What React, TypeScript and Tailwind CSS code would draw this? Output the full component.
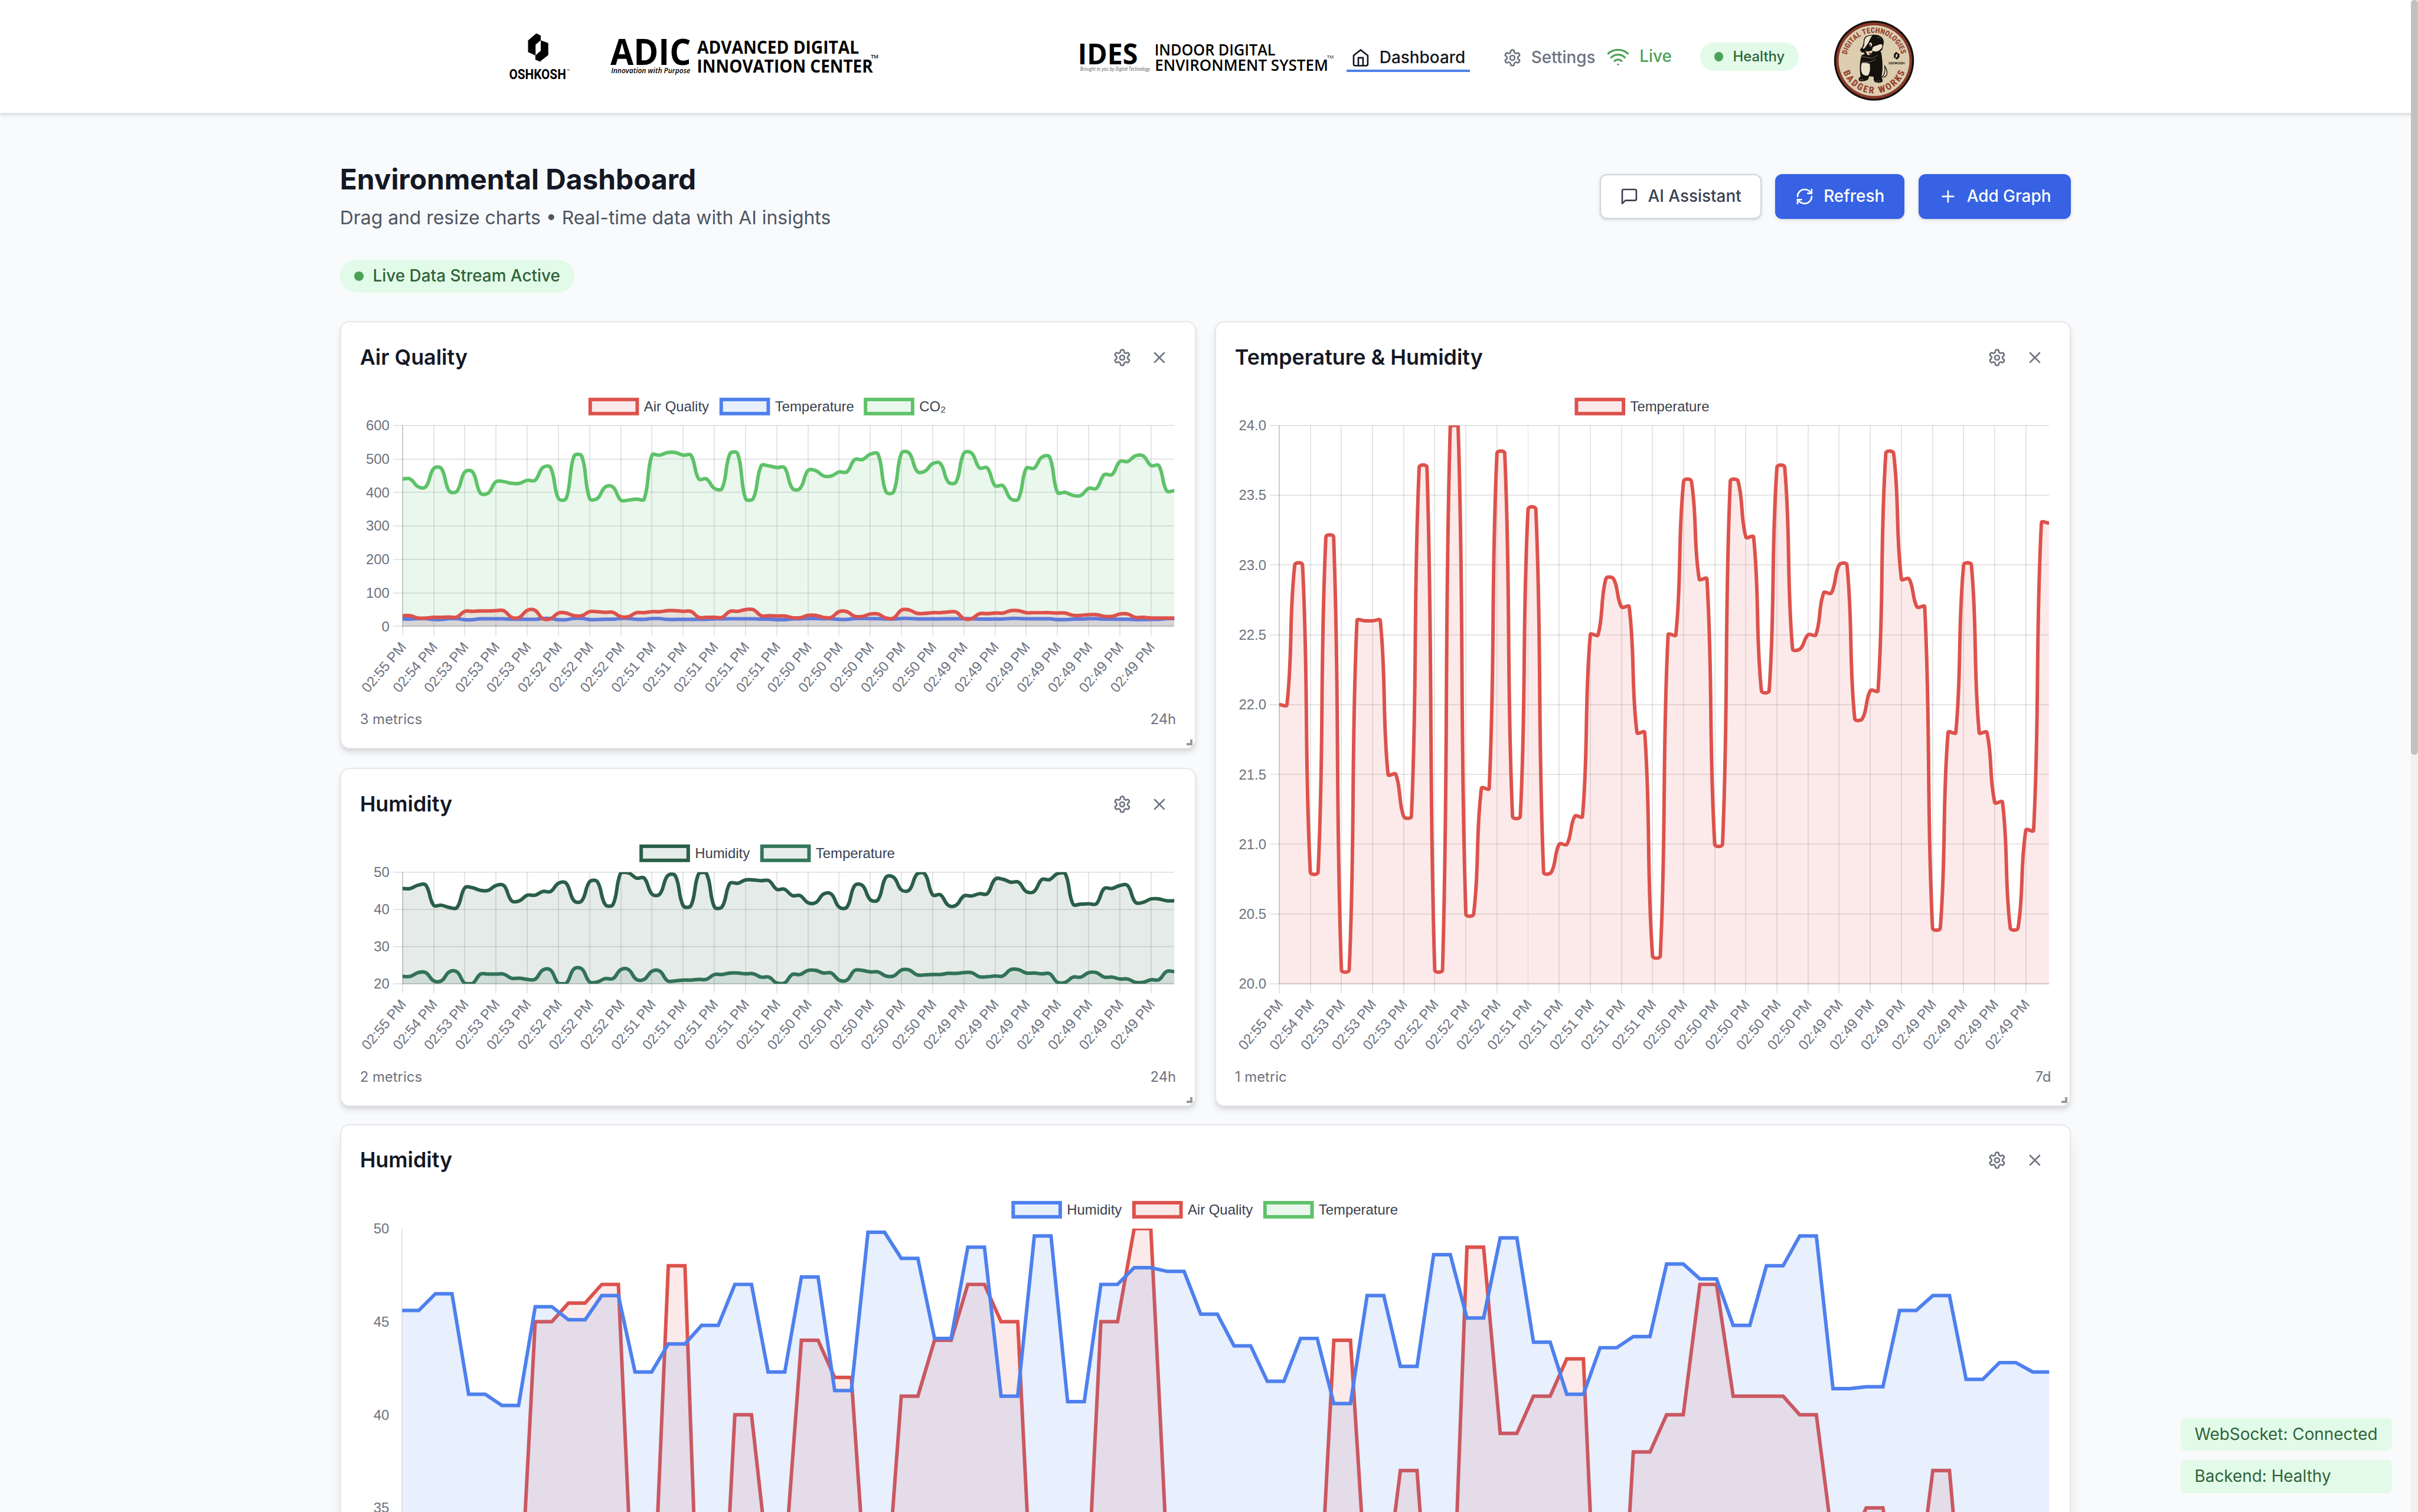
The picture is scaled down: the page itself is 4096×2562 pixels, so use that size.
import React from "react";

type Dataset = {
  label: string;
  labelWidth: number;
  color: string;
  fill: string;
  values: number[];
};

type Area = { left: number; right: number; top: number; bottom: number };
type Point = { x: number; y: number };

const TEMPERATURE = [
  22, 23, 20.8, 23.2, 20.1, 22.6, 22.6, 21.5, 21.2, 23.7, 20.1, 24, 20.5, 21.4, 23.8, 21.2, 23.4,
  20.8, 21, 21.2, 22.5, 22.9, 22.7, 21.8, 20.2, 22.5, 23.6, 22.9, 21, 23.6, 23.2, 22.1, 23.7, 22.4,
  22.5, 22.8, 23, 21.9, 22.1, 23.8, 22.9, 22.7, 20.4, 21.8, 23, 21.8, 21.3, 20.4, 21.1, 23.3,
];

const HUMIDITY = [
  45.6, 46.5, 41.1, 40.5, 45.8, 45.1, 46.4, 42.3, 43.8, 44.8, 47, 42.3, 47.4, 41.3, 49.8, 48.4,
  44.1, 49, 41, 49.6, 40.7, 47, 47.9, 47.7, 45.4, 43.7, 41.8, 44.1, 40.6, 46.4, 42.6, 48.6, 45.2,
  49.5, 43.9, 41.1, 43.6, 44.2, 48.1, 47.3, 44.8, 48, 49.6, 41.4, 41.5, 45.6, 46.4, 41.9, 42.8,
  42.3,
];

const AIR_QUALITY = [
  32, 25, 27, 28, 45, 46, 47, 27, 48, 23, 40, 32, 44, 42, 29, 41, 44, 47, 45, 27, 27, 45, 50, 32,
  31, 26, 33, 27, 44, 30, 37, 25, 49, 39, 41, 43, 23, 38, 40, 47, 41, 41, 40, 33, 35, 30, 37, 27,
  25, 25,
];

const CO2 = [
  440, 417, 471, 404, 461, 398, 432, 427, 436, 474, 382, 508, 382, 416, 377, 380, 511, 519, 511,
  440, 412, 515, 382, 479, 474, 412, 465, 449, 461, 498, 514, 402, 517, 463, 486, 431, 517, 473,
  420, 381, 472, 505, 400, 391, 412, 453, 492, 509, 480, 405,
];

const TIMES = [
  "02:55", "02:54", "02:53", "02:53", "02:53", "02:52", "02:52", "02:52", "02:51", "02:51",
  "02:51", "02:51", "02:51", "02:50", "02:50", "02:50", "02:50", "02:50", "02:49", "02:49",
  "02:49", "02:49", "02:49", "02:49", "02:49",
];

const RED = { color: "#dd524c", fill: "rgba(221,82,76,0.12)" };
const BLUE = { color: "#4e80ee", fill: "rgba(78,128,238,0.13)" };
const GREEN = { color: "#5ec269", fill: "rgba(94,194,105,0.13)" };
const FOREST = { color: "#2a5e48", fill: "rgba(42,94,72,0.12)" };
const PINE = { color: "#34765a", fill: "rgba(52,118,90,0.12)" };

const clamp = (v: number, lo: number, hi: number) => Math.max(lo, Math.min(hi, v));

/** Every reading is stored twice, one point apart. */
function toPoints(values: number[], area: Area, min: number, max: number): Point[] {
  const doubled = values.flatMap((v) => [v, v]);
  const step = (area.right - area.left) / (doubled.length - 1);
  return doubled.map((v, i) => ({
    x: area.left + i * step,
    y: area.bottom - ((v - min) / (max - min)) * (area.bottom - area.top),
  }));
}

/** Cardinal-like spline with control points kept inside the chart area. */
function linePath(points: Point[], area: Area, tension: number): string {
  if (tension === 0) {
    return points.map((p, i) => `${i ? "L" : "M"}${p.x.toFixed(2)} ${p.y.toFixed(2)}`).join("");
  }
  const controls = points.map((p, i) => {
    const prev = points[i - 1] ?? p;
    const next = points[i + 1] ?? p;
    const d01 = Math.hypot(p.x - prev.x, p.y - prev.y);
    const d12 = Math.hypot(next.x - p.x, next.y - p.y);
    const sum = d01 + d12 || 1;
    const fa = (tension * d01) / sum;
    const fb = (tension * d12) / sum;
    return {
      inX: clamp(p.x - fa * (next.x - prev.x), area.left, area.right),
      inY: clamp(p.y - fa * (next.y - prev.y), area.top, area.bottom),
      outX: clamp(p.x + fb * (next.x - prev.x), area.left, area.right),
      outY: clamp(p.y + fb * (next.y - prev.y), area.top, area.bottom),
    };
  });
  let d = `M${points[0].x.toFixed(2)} ${points[0].y.toFixed(2)}`;
  for (let i = 1; i < points.length; i++) {
    const a = controls[i - 1];
    const b = controls[i];
    d += `C${a.outX.toFixed(2)} ${a.outY.toFixed(2)} ${b.inX.toFixed(2)} ${b.inY.toFixed(2)} ${points[i].x.toFixed(2)} ${points[i].y.toFixed(2)}`;
  }
  return d;
}

type ChartProps = {
  id: string;
  width: number;
  height: number;
  left: number;
  right: number;
  min: number;
  max: number;
  ticks: string[];
  datasets: Dataset[];
  tension: number;
  grid: boolean;
};

function Chart({ id, width, height, left, right, min, max, ticks, datasets, tension, grid }: ChartProps) {
  const area: Area = { left, right, top: 32, bottom: height - 59 };
  const legendTotal =
    datasets.reduce((sum, d) => sum + 46 + d.labelWidth, 0) + 10 * (datasets.length - 1);
  let cursor = (width - legendTotal) / 2 - 0.3;
  const legend = datasets.map((d) => {
    const x = cursor;
    cursor += 46 + d.labelWidth + 10;
    return { ...d, x };
  });
  const step = (area.right - area.left) / 99;
  const yFor = (i: number) => area.top + ((area.bottom - area.top) * i) / (ticks.length - 1);

  return (
    <svg
      width={width}
      height={height}
      viewBox={`0 0 ${width} ${height}`}
      className="block overflow-visible"
      fontFamily="'Liberation Sans', Arial, sans-serif"
      fontSize="12"
    >
      <defs>
        <clipPath id={id}>
          <rect x={area.left} y={area.top} width={area.right - area.left} height={area.bottom - area.top} />
        </clipPath>
      </defs>

      {legend.map((d) => (
        <g key={d.label}>
          <rect x={d.x} y={10} width={40} height={12} fill={d.fill} stroke={d.color} strokeWidth={3} />
          <text x={d.x + 45.7} y={20} fill="#394150">
            {d.label}
          </text>
        </g>
      ))}

      <g stroke="rgba(0,0,0,0.1)" strokeWidth={1} shapeRendering="crispEdges">
        {grid &&
          ticks.map((t, i) => (
            <line key={t} x1={area.left - 8} x2={area.right} y1={yFor(i)} y2={yFor(i)} />
          ))}
        {grid &&
          TIMES.map((_, i) => {
            const x = area.left + i * 4 * step;
            return <line key={i} x1={x} x2={x} y1={area.top} y2={area.bottom + 8} />;
          })}
        <line x1={area.left} x2={area.left} y1={area.top} y2={area.bottom} />
        <line x1={area.left} x2={area.right} y1={area.bottom} y2={area.bottom} />
      </g>

      <g clipPath={`url(#${id})`}>
        {[...datasets].reverse().map((d) => {
          const path = linePath(toPoints(d.values, area, min, max), area, tension);
          return (
            <g key={d.label}>
              <path d={`${path}L${area.right} ${area.bottom}L${area.left} ${area.bottom}Z`} fill={d.fill} />
              <path d={path} fill="none" stroke={d.color} strokeWidth={3} strokeLinejoin="miter" />
            </g>
          );
        })}
      </g>

      <g fill="#6d727f">
        {ticks.map((t, i) => (
          <text key={t} x={area.left - 11} y={yFor(i) + 4.2} textAnchor="end">
            {t}
          </text>
        ))}
        {grid &&
          TIMES.map((t, i) => (
            <text
              key={i}
              textAnchor="end"
              transform={`translate(${area.left + i * 4 * step + 0.6} ${area.bottom + 15}) rotate(-50)`}
              y={4.2}
            >
              {`${t} PM`}
            </text>
          ))}
      </g>
    </svg>
  );
}

function Icon({ className, children }: { className: string; children: React.ReactNode }) {
  return (
    <svg
      viewBox="0 0 24 24"
      fill="none"
      stroke="currentColor"
      strokeWidth={2}
      strokeLinecap="round"
      strokeLinejoin="round"
      className={className}
    >
      {children}
    </svg>
  );
}

const GearPaths = () => (
  <>
    <path d="M12.22 2h-.44a2 2 0 0 0-2 2v.18a2 2 0 0 1-1 1.73l-.43.25a2 2 0 0 1-2 0l-.15-.08a2 2 0 0 0-2.73.73l-.22.38a2 2 0 0 0 .73 2.73l.15.1a2 2 0 0 1 1 1.72v.51a2 2 0 0 1-1 1.74l-.15.09a2 2 0 0 0-.73 2.73l.22.38a2 2 0 0 0 2.73.73l.15-.08a2 2 0 0 1 2 0l.43.25a2 2 0 0 1 1 1.73V20a2 2 0 0 0 2 2h.44a2 2 0 0 0 2-2v-.18a2 2 0 0 1 1-1.73l.43-.25a2 2 0 0 1 2 0l.15.08a2 2 0 0 0 2.73-.73l.22-.39a2 2 0 0 0-.73-2.73l-.15-.08a2 2 0 0 1-1-1.74v-.5a2 2 0 0 1 1-1.74l.15-.09a2 2 0 0 0 .73-2.73l-.22-.38a2 2 0 0 0-2.73-.73l-.15.08a2 2 0 0 1-2 0l-.43-.25a2 2 0 0 1-1-1.73V4a2 2 0 0 0-2-2z" />
    <circle cx="12" cy="12" r="3" />
  </>
);

type CardProps = {
  title: string;
  metrics: string;
  range: string;
  className: string;
  children: React.ReactNode;
};

function ChartCard({ title, metrics, range, className, children }: CardProps) {
  return (
    <section
      className={`relative flex flex-col rounded-lg border-[1.01px] border-[#e5e7ea] bg-white p-4 ${className}`}
    >
      <div className="flex h-7 items-center justify-between">
        <h3 className="text-lg font-semibold text-[#131825]">{title}</h3>
        <div className="flex gap-1 text-[#6d727f]">
          <button className="p-1.5">
            <Icon className="size-4">
              <GearPaths />
            </Icon>
          </button>
          <button className="p-1.5">
            <Icon className="size-4">
              <path d="M18 6 6 18" />
              <path d="m6 6 12 12" />
            </Icon>
          </button>
        </div>
      </div>
      <div className="mt-3">{children}</div>
      <div className="mt-3 flex justify-between text-xs text-[#6d727f]">
        <span>{metrics}</span>
        <span>{range}</span>
      </div>
      <span className="absolute right-[2px] bottom-[2px] size-[5px] border-r-[2.01px] border-b-[2.01px] border-black/40" />
    </section>
  );
}

function OshkoshLogo() {
  return (
    <svg viewBox="433 0 50 96" className="ml-[433px] h-24 w-[50px] shrink-0 overflow-visible">
      <path d="M455.9 28.3 459.6 30.2V34.2L455.2 38V47.2L448.8 44.3V34.4Z" />
      <path d="M459.6 34.2 466 36.7V46.8L458.9 52.5 455 50.7V47.2L459.6 43.2Z" />
      <text
        x="432.7"
        y="67.3"
        fontFamily="Roboto, sans-serif"
        fontWeight="700"
        fontSize="11.7"
        textLength="48.4"
        lengthAdjust="spacingAndGlyphs"
      >
        OSHKOSH
      </text>
      <text x="481.8" y="60.4" fontFamily="Roboto, sans-serif" fontSize="1.6">
        TM
      </text>
    </svg>
  );
}

function AdicLogo() {
  return (
    <svg
      viewBox="519 0 230 96"
      className="ml-9 h-24 w-[230px] shrink-0 overflow-visible"
      fontFamily="'Open Sans', 'Noto Sans', sans-serif"
      fontWeight="700"
    >
      <text x="519" y="55.2" fontSize="30.2" textLength="68.5" lengthAdjust="spacingAndGlyphs">
        ADIC
      </text>
      <text x="519.6" y="62.3" fontSize="6.2" fontWeight="600" fontStyle="italic" textLength="67.4" lengthAdjust="spacingAndGlyphs">
        Innovation with Purpose
      </text>
      <text x="592.8" y="45.6" fontSize="15.2" textLength="137.6" lengthAdjust="spacingAndGlyphs">
        ADVANCED DIGITAL
      </text>
      <text x="592.6" y="61.8" fontSize="15.2" textLength="149.6" lengthAdjust="spacingAndGlyphs">
        INNOVATION CENTER
      </text>
      <text x="740.5" y="49.9" fontSize="4.2" fontWeight="600" textLength="6.4" lengthAdjust="spacingAndGlyphs">
        TM
      </text>
    </svg>
  );
}

function IdesLogo() {
  return (
    <svg
      viewBox="917 0 218 96"
      className="ml-[168px] h-24 w-[218px] shrink-0 overflow-visible"
      fontFamily="'Open Sans', 'Noto Sans', sans-serif"
      fontWeight="700"
    >
      <text x="916.4" y="54.5" fontSize="24.4" textLength="51" lengthAdjust="spacingAndGlyphs">
        IDES
      </text>
      <text x="918.4" y="60" fontSize="4.3" fontWeight="400" fontStyle="italic" fill="#555" textLength="59.4" lengthAdjust="spacingAndGlyphs">
        Brought to you by Digital Technology
      </text>
      <text x="981.6" y="47.3" fontSize="13.2" fontWeight="600" textLength="102.8" lengthAdjust="spacingAndGlyphs">
        INDOOR DIGITAL
      </text>
      <text x="981.9" y="60.2" fontSize="13.2" fontWeight="600" textLength="147.4" lengthAdjust="spacingAndGlyphs">
        ENVIRONMENT SYSTEM
      </text>
      <text x="1128.2" y="49.8" fontSize="3.6" fontWeight="400" textLength="5.8" lengthAdjust="spacingAndGlyphs">
        TM
      </text>
    </svg>
  );
}

function BadgerSeal() {
  return (
    <svg viewBox="52 43 414 414" className="ml-[29.5px] mt-[7px] size-[69px] shrink-0">
      <defs>
        <path id="seal-top" d="M119.6 220.5A142 142 0 0 1 397.4 220.5" />
        <path id="seal-bottom" d="M101 308A168 168 0 0 0 416 308" />
      </defs>
      <circle cx="258.5" cy="250" r="204" fill="#15110d" />
      <circle cx="258.5" cy="250" r="194" fill="#8e3a2b" />
      <circle cx="258.5" cy="250" r="184" fill="#6e2c20" />
      <circle cx="258.5" cy="250" r="181" fill="#dccdae" />
      <g fill="#94402f" fontFamily="Roboto, sans-serif" fontWeight="800" fontStretch="75%">
        <text fontSize="38" textLength="384" lengthAdjust="spacing">
          <textPath href="#seal-top">DIGITAL TECHNOLOGIES</textPath>
        </text>
        <text fontSize="48" textLength="408" lengthAdjust="spacing">
          <textPath href="#seal-bottom">BADGER WORKS</textPath>
        </text>
      </g>

      {/* tail */}
      <path d="M298 332C312 326 316 304 313 278C326 296 330 320 316 331C310 336 302 336 298 332Z" fill="#ece2cc" stroke="#15110d" strokeWidth="4" />
      {/* body, legs and feet */}
      <path d="M196 222C184 250 184 300 190 332C180 336 176 348 184 354C198 358 222 354 228 346C234 338 230 334 234 330L256 332C258 340 254 350 262 358C272 366 296 364 302 356C304 346 298 340 296 332C306 300 302 240 294 206L250 200Z" fill="#15110d" />
      <path d="M196 262C212 260 228 262 236 266C240 290 238 316 226 326C212 330 198 322 194 306C191 290 192 274 196 262Z" fill="#ece2cc" />
      {/* head */}
      <path d="M206 146C206 126 226 119 252 118C284 116 308 130 308 156C308 172 302 176 302 190C296 204 276 214 256 224C236 232 214 226 206 208C196 210 186 202 188 192C196 184 204 178 206 146Z" fill="#15110d" />
      <path d="M210 148C212 130 226 123 250 122C238 134 236 150 226 164C218 174 214 186 204 190C198 188 202 182 206 178C210 168 208 158 210 148Z" fill="#ece2cc" />
      <path d="M262 176C278 172 290 162 300 168C302 182 296 194 276 202C262 206 252 202 248 196C252 186 250 180 262 176Z" fill="#ece2cc" />
      <ellipse cx="241" cy="168" rx="7" ry="10" fill="#ece2cc" />
      <ellipse cx="239" cy="171" rx="3" ry="5" fill="#15110d" />
      <path d="M212 200C224 206 240 204 252 196C250 212 240 222 228 222C220 218 224 208 212 200Z" fill="#ece2cc" />
      <path d="M228 214C234 208 242 208 246 210C242 218 236 220 228 214Z" fill="#94402f" />
      <path d="M272 136C280 128 292 132 296 142" fill="none" stroke="#8c826f" strokeWidth="2" />
      {/* crossed arms */}
      <path d="M188 232C204 226 226 236 250 238C262 234 270 226 276 222" fill="none" stroke="#8c826f" strokeWidth="2.5" />
      <path d="M196 256C220 262 248 256 268 244" fill="none" stroke="#8c826f" strokeWidth="2.5" />
      <path d="M188 344l2 6M198 344l2 7M274 352l2 7M286 350l3 7" stroke="#ece2cc" strokeWidth="2" />

      {/* small maker's mark */}
      <path d="M371 205L377 209V214L369 221V240L360 234V218Z" fill="#15110d" />
      <path d="M377 211L388 216V232L376 245L370 241V236L378 228Z" fill="#15110d" />
      <text x="333" y="269" fontFamily="Roboto, sans-serif" fontWeight="700" fontSize="18" fill="#15110d" textLength="82" lengthAdjust="spacingAndGlyphs">
        OSHKOSH
      </text>
    </svg>
  );
}

function Header() {
  return (
    <header className="relative z-10 h-[97px] shrink-0 border-b-[1.01px] border-[#e5e7ea] bg-white shadow-sm">
      <div className="flex h-24 items-center">
        <OshkoshLogo />
        <AdicLogo />
        <IdesLogo />
        <nav className="ml-[10px] flex shrink-0 gap-6 text-sm font-medium">
          <a className="flex h-[26px] flex-col whitespace-nowrap text-[#131825]">
            <span className="flex items-center px-1 pt-1">
              <Icon className="mr-2 size-4">
                <path d="m3 9 9-7 9 7v11a2 2 0 0 1-2 2H5a2 2 0 0 1-2-2z" />
                <path d="M9 22V12h6v10" />
              </Icon>
              Dashboard
            </span>
            <span className="h-0.5 w-full shrink-0 bg-[#4e80ee]" />
          </a>
          <a className="flex h-6 items-center whitespace-nowrap px-1 pt-1 text-[#6d727f]">
            <Icon className="mr-2 size-4">
              <GearPaths />
            </Icon>
            Settings
          </a>
        </nav>
        <div className="ml-[5.5px] flex shrink-0 items-center text-sm font-medium text-[#4ca154]">
          <Icon className="mr-2 size-5">
            <path d="M12 20h.01" />
            <path d="M2 8.82a15 15 0 0 1 20 0" />
            <path d="M5 12.859a10 10 0 0 1 14 0" />
            <path d="M8.5 16.429a5 5 0 0 1 7 0" />
          </Icon>
          Live
        </div>
        <div className="ml-6 flex h-6 shrink-0 items-center rounded-full bg-[#e2fbe8] px-3 text-xs font-medium text-[#306339]">
          <span className="mr-2 size-2 rounded-full bg-[#4ca154]" />
          Healthy
        </div>
        <BadgerSeal />
      </div>
    </header>
  );
}

function Toolbar() {
  const base = "flex h-[38px] items-center whitespace-nowrap rounded-md border-[1.01px] px-4 text-sm font-medium shadow-sm";
  return (
    <div className="flex gap-3">
      <button className={`${base} border-[#d2d5da] bg-white text-[#394150]`}>
        <Icon className="mr-2 size-4">
          <path d="M21 15a2 2 0 0 1-2 2H7l-4 4V5a2 2 0 0 1 2-2h14a2 2 0 0 1 2 2z" />
        </Icon>
        AI Assistant
      </button>
      <button className={`${base} border-[#3662e3] bg-[#3662e3] text-white`}>
        <Icon className="mr-2 size-4">
          <path d="M3 12a9 9 0 0 1 9-9 9.75 9.75 0 0 1 6.74 2.74L21 8" />
          <path d="M21 3v5h-5" />
          <path d="M21 12a9 9 0 0 1-9 9 9.75 9.75 0 0 1-6.74-2.74L3 16" />
          <path d="M8 16H3v5" />
        </Icon>
        Refresh
      </button>
      <button className={`${base} border-[#3662e3] bg-[#3662e3] text-white`}>
        <Icon className="mr-2 size-4">
          <path d="M5 12h14" />
          <path d="M12 5v14" />
        </Icon>
        Add Graph
      </button>
    </div>
  );
}

const airQuality: Dataset = { label: "Air Quality", labelWidth: 55.4, ...RED, values: AIR_QUALITY };
const temperature: Dataset = { label: "Temperature", labelWidth: 66.7, ...BLUE, values: TEMPERATURE };
const humidity: Dataset = { label: "Humidity", labelWidth: 46.7, ...BLUE, values: HUMIDITY };
const co2: Dataset = { label: "CO₂", labelWidth: 22, ...GREEN, values: CO2 };

export default function App() {
  return (
    <div className="h-[2562px] w-[4096px] overflow-hidden bg-[#f9fafc]">
      <div className="relative flex h-[1286px] w-[2056px] flex-col overflow-hidden bg-[#f9fafc] font-['Inter',sans-serif] [zoom:1.99222]">
        <Header />

        <main className="ml-[289px] w-[1472px] pt-10">
          <div className="flex items-center justify-between">
            <div>
              <h1 className="text-2xl font-bold text-[#131825]">Environmental Dashboard</h1>
              <p className="mt-1 text-base text-[#4d5562]">
                Drag and resize charts • Real-time data with AI insights
              </p>
            </div>
            <Toolbar />
          </div>

          <div className="mt-6 flex">
            <div className="flex h-7 items-center rounded-full bg-[#e2fbe8] px-3 text-sm font-medium text-[#306339]">
              <span className="mr-2 size-2 rounded-full bg-[#4ca154]" />
              Live Data Stream Active
            </div>
          </div>

          <div className="mt-6 grid grid-cols-2 gap-4">
            <div className="flex flex-col gap-4">
              <ChartCard title="Air Quality" metrics="3 metrics" range="24h" className="h-[364px] shadow-md">
                <Chart
                  id="clip-air"
                  width={694}
                  height={262}
                  left={36}
                  right={692.4}
                  min={0}
                  max={600}
                  ticks={["600", "500", "400", "300", "200", "100", "0"]}
                  datasets={[airQuality, temperature, co2]}
                  tension={0.4}
                  grid
                />
              </ChartCard>
              <ChartCard title="Humidity" metrics="2 metrics" range="24h" className="h-[288px] shadow-md">
                <Chart
                  id="clip-humidity"
                  width={694}
                  height={186}
                  left={36}
                  right={692.4}
                  min={20}
                  max={50}
                  ticks={["50", "40", "30", "20"]}
                  datasets={[
                    { ...humidity, ...FOREST },
                    { ...temperature, ...PINE },
                  ]}
                  tension={0.4}
                  grid
                />
              </ChartCard>
            </div>
            <ChartCard title="Temperature & Humidity" metrics="1 metric" range="7d" className="h-[668px] shadow-md">
              <Chart
                id="clip-temperature"
                width={694}
                height={566}
                left={37.6}
                right={692.3}
                min={20}
                max={24}
                ticks={["24.0", "23.5", "23.0", "22.5", "22.0", "21.5", "21.0", "20.5", "20.0"]}
                datasets={[{ ...temperature, ...RED }]}
                tension={0.4}
                grid
              />
            </ChartCard>
            <ChartCard
              title="Humidity"
              metrics="3 metrics"
              range="24h"
              className="col-span-2 -mt-px h-[668px] shadow-lg"
            >
              <Chart
                id="clip-overview"
                width={1438}
                height={566}
                left={35.7}
                right={1436.3}
                min={20}
                max={50}
                ticks={["50", "45", "40", "35", "30", "25", "20"]}
                datasets={[humidity, airQuality, { ...temperature, ...GREEN }]}
                tension={0}
                grid={false}
              />
            </ChartCard>
          </div>
        </main>

        <div className="absolute right-[22px] bottom-4 flex w-[180px] flex-col gap-2 text-sm text-[#306339]">
          <div className="rounded-sm bg-[#e2fbe8] px-3 py-1">WebSocket: Connected</div>
          <div className="rounded-sm bg-[#e2fbe8] px-3 py-1">Backend: Healthy</div>
        </div>

        <div className="absolute top-0 right-0 z-20 h-full w-1.5 bg-[#f1f1f1]">
          <div className="h-[642px] rounded-[3px] bg-[#c1c1c1]" />
        </div>
      </div>
    </div>
  );
}
